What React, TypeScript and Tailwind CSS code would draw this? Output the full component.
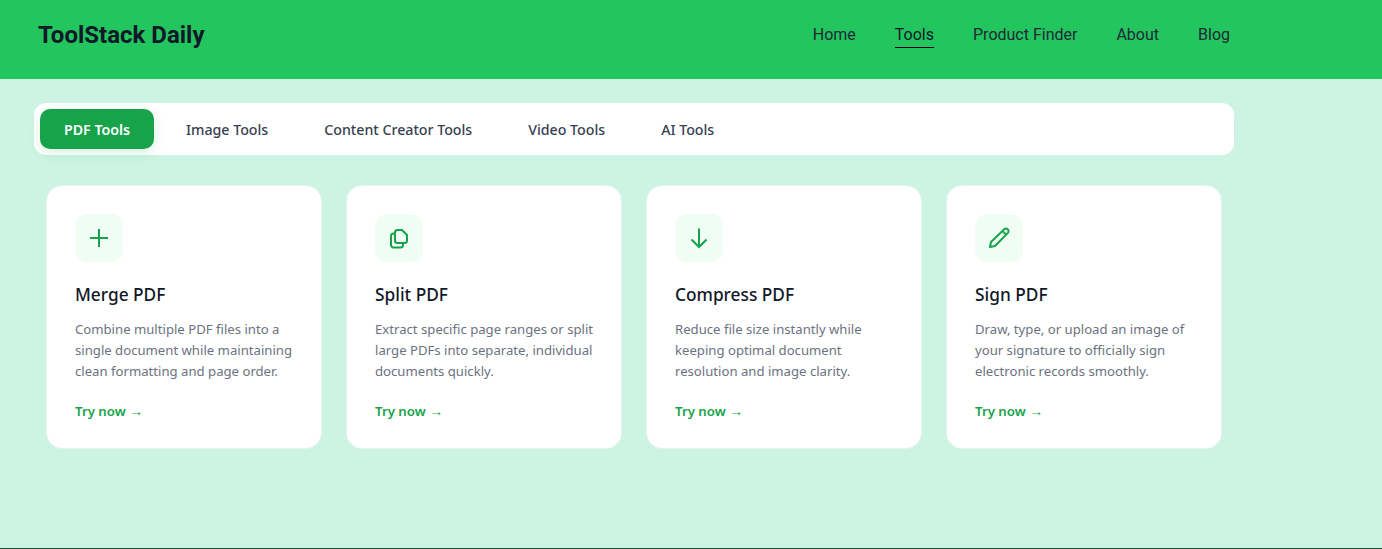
import React from "react";

const sans = "font-['Noto_Sans','Open_Sans',sans-serif]";

const PlusIcon = () => (
  <svg width="24" height="24" viewBox="0 0 24 24" fill="none" stroke="#16a34a" strokeWidth="2">
    <path d="M12 3v18M3 12h18" />
  </svg>
);
const CopyIcon = () => (
  <svg width="24" height="24" viewBox="0 0 24 24" fill="none" stroke="#16a34a" strokeWidth="2" strokeLinecap="round" strokeLinejoin="round">
    <path d="M8 14.5V6.5a2.5 2.5 0 0 1 2.5-2.5h4.5l5 5v5.5a2.5 2.5 0 0 1-2.5 2.5h-7A2.5 2.5 0 0 1 8 14.5z" />
    <path d="M8 7.5H6.5A2.5 2.5 0 0 0 4 10v9a2.5 2.5 0 0 0 2.5 2.5h7A2.5 2.5 0 0 0 16 19v-2" />
  </svg>
);
const DownIcon = () => (
  <svg width="24" height="24" viewBox="0 0 24 24" fill="none" stroke="#16a34a" strokeWidth="2">
    <path d="M12 2.5v19M4.5 13.5l7.5 7.5 7.5-7.5" />
  </svg>
);
const PencilIcon = () => (
  <svg width="24" height="24" viewBox="0 0 24 24" fill="none" stroke="#16a34a" strokeWidth="2" strokeLinejoin="round">
    <path d="M3 21l1-5L17.5 3a2.6 2.6 0 0 1 3.6 3.6L8 20l-5 1z" />
    <path d="M15.5 5l3.6 3.6" />
  </svg>
);

const nav = ["Home", "Tools", "Product Finder", "About", "Blog"];
const tabs = ["PDF Tools", "Image Tools", "Content Creator Tools", "Video Tools", "AI Tools"];
const cards = [
  { t: "Merge PDF", d: "Combine multiple PDF files into a single document while maintaining clean formatting and page order.", i: <PlusIcon /> },
  { t: "Split PDF", d: "Extract specific page ranges or split large PDFs into separate, individual documents quickly.", i: <CopyIcon /> },
  { t: "Compress PDF", d: "Reduce file size instantly while keeping optimal document resolution and image clarity.", i: <DownIcon /> },
  { t: "Sign PDF", d: "Draw, type, or upload an image of your signature to officially sign electronic records smoothly.", i: <PencilIcon /> },
];

export default function App() {
  return (
    <div className="min-h-[549px] bg-[#ccf3e3] border-b border-[#14532d] flex flex-col">
      <header className="h-[79px] bg-[#22c55e] pl-[38px] pr-[152px] flex items-center justify-between font-['Roboto',sans-serif]">
        <div className="text-2xl font-bold text-[#111827] pb-[9px]">ToolStack Daily</div>
        <nav className="flex gap-[39px] pb-[9px]">
          {nav.map((n) => (
            <a key={n} className={n === "Tools" ? "relative text-base text-[#0f172a]" : "text-base text-[#1f2937]"}>
              {n}
              {n === "Tools" && <span className="absolute left-0 right-0 -bottom-px h-px bg-black" />}
            </a>
          ))}
        </nav>
      </header>
      <main className={`w-[1200px] ml-[34px] pt-6 ${sans}`}>
        <div className="h-[52px] bg-white rounded-xl p-1.5 flex gap-2">
          {tabs.map((t, i) => (
            <button
              key={t}
              className={
                i === 0
                  ? "h-10 w-[114px] pt-px rounded-[10px] bg-[#16a34a] text-white text-[14.2px] font-semibold shadow-[0_4px_12px_rgba(22,163,74,0.15)]"
                  : "h-10 px-6 pt-px text-[14.2px] font-medium text-[#374151]"
              }
            >
              {t}
            </button>
          ))}
        </div>
        <div className="grid grid-cols-4 gap-6 px-3 pt-[30px]">
          {cards.map((c) => (
            <div key={c.t} className="h-[264px] bg-white rounded-2xl border border-[#e5f5ec] pt-7 pb-7 pl-7 pr-5 flex flex-col items-start">
              <div className="w-12 h-12 shrink-0 rounded-xl bg-[#f0fdf4] flex items-center justify-center">{c.i}</div>
              <h3 className="mt-[19px] text-[17.3px] leading-[27px] font-medium text-[#111827]">{c.t}</h3>
              <p className="mt-[11px] text-[13.15px] leading-[21px] text-[#6b7280]">{c.d}</p>
              <a className="mt-[19px] text-[13.25px] leading-[20px] font-semibold text-[#16a34a]">
                Try now <span className="font-['Liberation_Sans',sans-serif] font-normal text-[14px]">→</span>
              </a>
            </div>
          ))}
        </div>
      </main>
    </div>
  );
}
